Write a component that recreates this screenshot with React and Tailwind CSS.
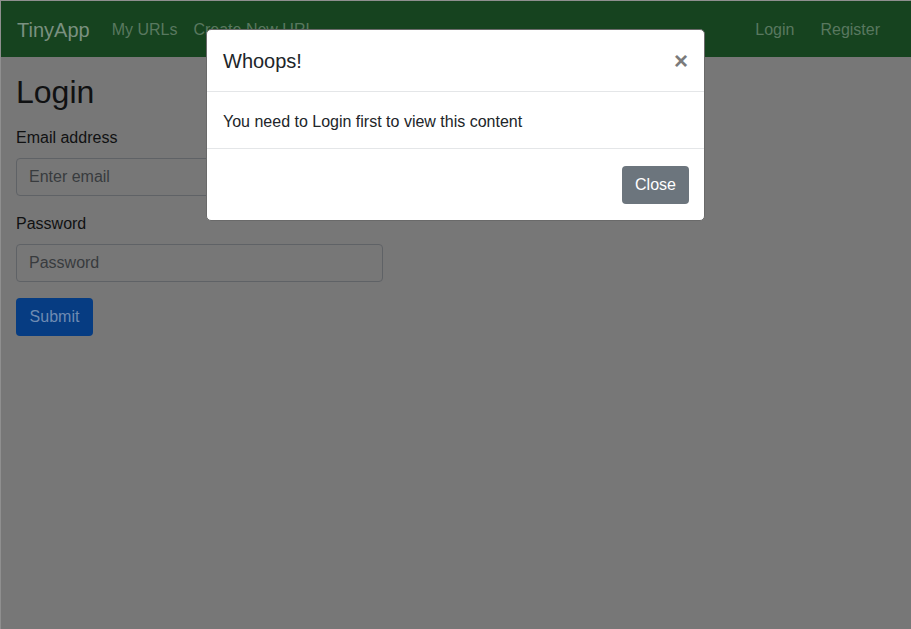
import React from "react";

export default function App() {
  return (
    <div
      className="relative w-[911px] h-[629px] overflow-hidden bg-[#777777] border-t border-l border-[#8f8f8f]"
      style={{ fontFamily: '"Liberation Sans", Arial, sans-serif' }}
    >
      <nav className="h-[56px] bg-[#16431f] flex items-center px-4 pt-[1px]">
        <span className="text-[20px] text-[#7a9080] mr-[14px] leading-[30px]">TinyApp</span>
        <span className="text-[16px] text-[#59785f] px-2">My URLs</span>
        <span className="text-[16px] text-[#59785f] px-2">Create New URL</span>
        <div className="ml-auto flex">
          <span className="text-[16px] text-[#59785f] px-2 mr-[10px]">Login</span>
          <span className="text-[16px] text-[#59785f] px-2 mr-[7px]">Register</span>
        </div>
      </nav>
      <main className="px-[15px] pt-[16px]">
        <h1 className="text-[32px] leading-[38px] text-[#101112] font-medium mb-[15px]">Login</h1>
        <label className="block text-[16px] leading-[24px] text-[#101112] mb-[8px]">Email address</label>
        <div className="w-[367px] h-[38px] border border-[#5f6266] rounded-[4px] flex items-center px-3 text-[16px] text-[#383b3e]">
          Enter email
        </div>
        <label className="block text-[16px] leading-[24px] text-[#101112] mt-[16px] mb-[8px]">Password</label>
        <div className="w-[367px] h-[38px] border border-[#5f6266] rounded-[4px] flex items-center px-3 text-[16px] text-[#383b3e]">
          Password
        </div>
        <div className="mt-[16px] w-[77px] h-[38px] rounded-[4px] bg-[#063c82] flex items-center justify-center text-[16px] text-[#6f8bb2]">
          Submit
        </div>
      </main>

      <div className="absolute left-[205px] top-[28px] w-[499px] bg-white rounded-[5px] border border-[#6a6a6a]">
        <div className="h-[62px] flex items-center justify-between px-4 border-b border-[#e4e6e8]">
          <span className="text-[20px] text-[#212529] font-medium">Whoops!</span>
          <span className="text-[24px] font-bold text-[#7b7b7b] leading-none">×</span>
        </div>
        <div className="h-[57px] flex items-center px-4 border-b border-[#e4e6e8] text-[16px] text-[#212529] pt-[3px]">
          You need to Login first to view this content
        </div>
        <div className="h-[71px] flex items-center justify-end px-[15px]">
          <div className="w-[67px] h-[38px] rounded-[4px] bg-[#6c757d] flex items-center justify-center text-white text-[16px]">
            Close
          </div>
        </div>
      </div>
    </div>
  );
}
